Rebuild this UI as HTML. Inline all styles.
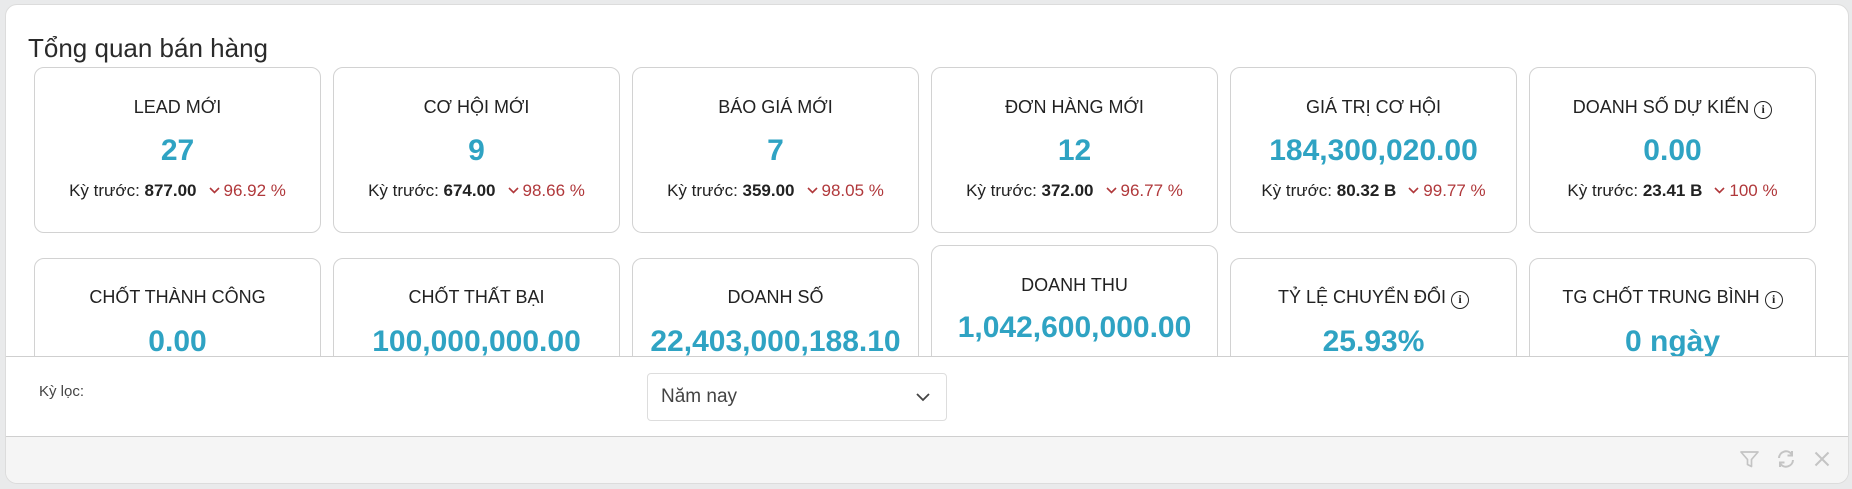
<!DOCTYPE html>
<html><head><meta charset="utf-8"><style>
*{margin:0;padding:0;box-sizing:border-box}
body{width:1852px;height:489px;background:#e9eaeb;font-family:"Liberation Sans",sans-serif;position:relative;overflow:hidden;color:#333}
.panel{position:absolute;left:5px;top:4px;width:1844px;height:480px;background:#fff;border-radius:12px;border:1px solid #dcdcdc;overflow:hidden}
.title{position:absolute;left:22px;top:28px;font-size:26px;color:#2a2a2a}
.card{position:absolute;width:287px;height:166px;border:1px solid #d2d2d2;border-radius:10px;background:#fff;text-align:center}
.ct{position:absolute;left:0;right:0;font-size:18px;color:#222;white-space:nowrap}
.cv{position:absolute;left:0;right:0;font-size:30px;font-weight:bold;color:#2fa3c3;white-space:nowrap}
.cp{position:absolute;left:0;right:0;font-size:17px;color:#222;white-space:nowrap}
.cp b{font-weight:bold}
.cp .r{color:#b0383b;margin-left:12px}
.cp svg{vertical-align:2px;margin-right:4px}
.info{display:inline-block;width:18px;height:18px;border:1.6px solid #222;border-radius:50%;font-size:12px;line-height:15px;font-weight:bold;vertical-align:0px;margin-left:5px;font-family:"Liberation Serif",serif}
.bot{position:absolute;left:0;top:351px;width:100%;height:80px;background:#fff;border-top:1px solid #cfcfcf}
.foot{position:absolute;left:0;top:431px;width:100%;height:50px;background:#f5f5f5;border-top:1px solid #cfcfcf}
</style></head><body>
<div class="panel">
<div class="title">Tổng quan bán hàng</div>

<div class="card" style="left:28px;top:62px"><div class="ct" style="top:29px">LEAD MỚI</div><div class="cv" style="top:66px">27</div><div class="cp" style="top:113px">Kỳ trước: <b>877.00</b><span class="r"><svg width="11" height="7" viewBox="0 0 11 7"><path d="M1 1l4.5 4.5L10 1" fill="none" stroke="#b0383b" stroke-width="1.6"/></svg>96.92 %</span></div></div>
<div class="card" style="left:327px;top:62px"><div class="ct" style="top:29px">CƠ HỘI MỚI</div><div class="cv" style="top:66px">9</div><div class="cp" style="top:113px">Kỳ trước: <b>674.00</b><span class="r"><svg width="11" height="7" viewBox="0 0 11 7"><path d="M1 1l4.5 4.5L10 1" fill="none" stroke="#b0383b" stroke-width="1.6"/></svg>98.66 %</span></div></div>
<div class="card" style="left:626px;top:62px"><div class="ct" style="top:29px">BÁO GIÁ MỚI</div><div class="cv" style="top:66px">7</div><div class="cp" style="top:113px">Kỳ trước: <b>359.00</b><span class="r"><svg width="11" height="7" viewBox="0 0 11 7"><path d="M1 1l4.5 4.5L10 1" fill="none" stroke="#b0383b" stroke-width="1.6"/></svg>98.05 %</span></div></div>
<div class="card" style="left:925px;top:62px"><div class="ct" style="top:29px">ĐƠN HÀNG MỚI</div><div class="cv" style="top:66px">12</div><div class="cp" style="top:113px">Kỳ trước: <b>372.00</b><span class="r"><svg width="11" height="7" viewBox="0 0 11 7"><path d="M1 1l4.5 4.5L10 1" fill="none" stroke="#b0383b" stroke-width="1.6"/></svg>96.77 %</span></div></div>
<div class="card" style="left:1224px;top:62px"><div class="ct" style="top:29px">GIÁ TRỊ CƠ HỘI</div><div class="cv" style="top:66px">184,300,020.00</div><div class="cp" style="top:113px">Kỳ trước: <b>80.32 B</b><span class="r"><svg width="11" height="7" viewBox="0 0 11 7"><path d="M1 1l4.5 4.5L10 1" fill="none" stroke="#b0383b" stroke-width="1.6"/></svg>99.77 %</span></div></div>
<div class="card" style="left:1523px;top:62px"><div class="ct" style="top:29px">DOANH SỐ DỰ KIẾN<span class="info">i</span></div><div class="cv" style="top:66px">0.00</div><div class="cp" style="top:113px">Kỳ trước: <b>23.41 B</b><span class="r"><svg width="11" height="7" viewBox="0 0 11 7"><path d="M1 1l4.5 4.5L10 1" fill="none" stroke="#b0383b" stroke-width="1.6"/></svg>100 %</span></div></div>

<div class="card" style="left:28px;top:253px"><div class="ct" style="top:28px">CHỐT THÀNH CÔNG</div><div class="cv" style="top:66px">0.00</div></div>
<div class="card" style="left:327px;top:253px"><div class="ct" style="top:28px">CHỐT THẤT BẠI</div><div class="cv" style="top:66px">100,000,000.00</div></div>
<div class="card" style="left:626px;top:253px"><div class="ct" style="top:28px">DOANH SỐ</div><div class="cv" style="top:66px">22,403,000,188.10</div></div>
<div class="card" style="left:925px;top:240px"><div class="ct" style="top:29px">DOANH THU</div><div class="cv" style="top:65px">1,042,600,000.00</div></div>
<div class="card" style="left:1224px;top:253px"><div class="ct" style="top:28px">TỶ LỆ CHUYỂN ĐỔI<span class="info">i</span></div><div class="cv" style="top:66px">25.93%</div></div>
<div class="card" style="left:1523px;top:253px"><div class="ct" style="top:28px">TG CHỐT TRUNG BÌNH<span class="info">i</span></div><div class="cv" style="top:66px">0 ngày</div></div>

<div class="bot">
<div style="position:absolute;left:33px;top:26px;font-size:15px;color:#444">Kỳ lọc:</div>
<div style="position:absolute;left:641px;top:16px;width:300px;height:48px;border:1px solid #ddd;border-radius:4px">
<div style="position:absolute;left:13px;top:12px;font-size:19px;color:#444">Năm nay</div>
<svg style="position:absolute;left:268px;top:18px" width="14" height="10" viewBox="0 0 14 10"><path d="M1 2l6 6 6-6" fill="none" stroke="#444" stroke-width="1.8"/></svg>
</div>
</div>
<div class="foot">
<svg style="position:absolute;left:1734px;top:14px" width="19" height="17" viewBox="0 0 19 17"><path d="M1 1h17l-6.5 7.5v7l-4-2v-5z" fill="none" stroke="#c4c4c4" stroke-width="1.7" stroke-linejoin="round"/></svg>
<svg style="position:absolute;left:1771px;top:13px" width="18" height="18" viewBox="0 0 18 18"><path d="M2 8a7 7 0 0 1 12.5-4M16 10a7 7 0 0 1-12.5 4" fill="none" stroke="#c4c4c4" stroke-width="2"/><path d="M15 1v4.5h-4.5M3 17v-4.5h4.5" fill="none" stroke="#c4c4c4" stroke-width="2"/></svg>
<svg style="position:absolute;left:1808px;top:14px" width="16" height="16" viewBox="0 0 16 16"><path d="M1.5 1.5l13 13M14.5 1.5l-13 13" stroke="#c4c4c4" stroke-width="2"/></svg>
</div>
</div>
</body></html>
